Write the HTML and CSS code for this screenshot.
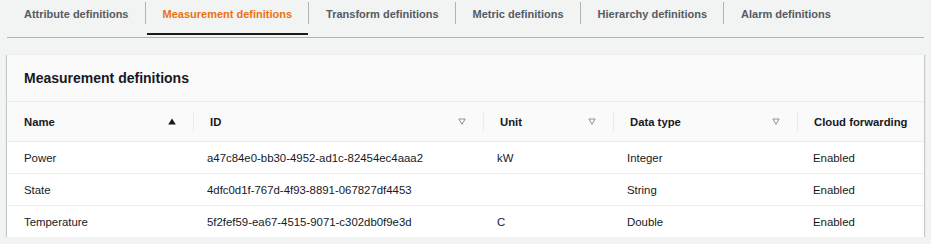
FILE: index.html
```html
<!DOCTYPE html>
<html lang="en">
<head>
    <meta charset="UTF-8">
    <title>Measurement definitions</title>
    <link rel="stylesheet" href="styles.css">
</head>
<body>
    <div class="tabs">
        <div class="tab"><span>Attribute definitions</span></div>
        <div class="tab active"><span>Measurement definitions</span></div>
        <div class="tab"><span>Transform definitions</span></div>
        <div class="tab"><span>Metric definitions</span></div>
        <div class="tab"><span>Hierarchy definitions</span></div>
        <div class="tab"><span>Alarm definitions</span></div>
    </div>

    <div class="card">
        <div class="card-header">Measurement definitions</div>
        <table class="defs">
            <colgroup>
                <col class="col-name">
                <col class="col-id">
                <col class="col-unit">
                <col class="col-type">
                <col>
            </colgroup>
            <thead>
                <tr>
                    <th><div class="th-inner">Name
                        <svg class="sort" width="8" height="7" viewBox="0 0 8 7"><path d="M4 0.5 L7.8 6.5 H0.2 Z" fill="#16191f"/></svg>
                    </div></th>
                    <th class="sep"><div class="th-inner">ID
                        <svg class="sort" width="8" height="7" viewBox="0 0 8 7"><path d="M0.8 1 H7.2 L4 6.3 Z" fill="none" stroke="#879596" stroke-width="1"/></svg>
                    </div></th>
                    <th class="sep"><div class="th-inner">Unit
                        <svg class="sort" width="8" height="7" viewBox="0 0 8 7"><path d="M0.8 1 H7.2 L4 6.3 Z" fill="none" stroke="#879596" stroke-width="1"/></svg>
                    </div></th>
                    <th class="sep"><div class="th-inner">Data type
                        <svg class="sort" width="8" height="7" viewBox="0 0 8 7"><path d="M0.8 1 H7.2 L4 6.3 Z" fill="none" stroke="#879596" stroke-width="1"/></svg>
                    </div></th>
                    <th class="sep"><div class="th-inner">Cloud forwarding</div></th>
                </tr>
            </thead>
            <tbody>
                <tr>
                    <td>Power</td>
                    <td>a47c84e0-bb30-4952-ad1c-82454ec4aaa2</td>
                    <td>kW</td>
                    <td>Integer</td>
                    <td>Enabled</td>
                </tr>
                <tr>
                    <td>State</td>
                    <td>4dfc0d1f-767d-4f93-8891-067827df4453</td>
                    <td></td>
                    <td>String</td>
                    <td>Enabled</td>
                </tr>
                <tr>
                    <td>Temperature</td>
                    <td>5f2fef59-ea67-4515-9071-c302db0f9e3d</td>
                    <td>C</td>
                    <td>Double</td>
                    <td>Enabled</td>
                </tr>
            </tbody>
        </table>
    </div>
</body>
</html>
```

FILE: styles.css
```css
body {
    margin: 0;
    padding: 0;
    font-family: 'Liberation Sans', Arial, sans-serif;
    background: #f2f3f3;
    color: #16191f;
}

.tabs {
    display: flex;
    margin: 0 7px 0 7px;
    border-bottom: 1px solid #aab7b8;
    height: 37px;
}

.tab {
    position: relative;
    padding-top: 2px;
    font-size: 11px;
    font-weight: bold;
    color: #545b64;
}

.tab span {
    display: block;
    height: 22px;
    line-height: 24px;
    padding: 0 16px 0 17px;
    border-left: 1px solid #aab7b8;
}

.tab:first-child span {
    border-left: none;
}

.tab.active {
    color: #ec7211;
}

.tab.active::after {
    content: "";
    position: absolute;
    left: 2px;
    right: 0;
    bottom: 2px;
    height: 2px;
    background: #16191f;
}

.card {
    margin: 16px 7px 0 7px;
    background: #ffffff;
    border-top: 1px solid #eaeded;
    box-shadow: 0 1px 1px 0 rgba(0, 28, 36, 0.3), 1px 1px 1px 0 rgba(0, 28, 36, 0.15), -1px 1px 1px 0 rgba(0, 28, 36, 0.15);
}

.card-header {
    background: #fafafa;
    height: 46px;
    line-height: 46px;
    padding-left: 17px;
    font-size: 14px;
    font-weight: bold;
    border-bottom: 1px solid #eaeded;
}

.defs {
    width: 100%;
    border-collapse: collapse;
    table-layout: fixed;
    font-size: 11.4px;
}

.col-name { width: 186px; }
.col-id { width: 290px; }
.col-unit { width: 130px; }
.col-type { width: 184px; }

.defs th {
    background: #fafafa;
    height: 39px;
    padding: 0;
    text-align: left;
    font-weight: bold;
    font-size: 11.3px;
    white-space: nowrap;
    border-bottom: 1px solid #eaeded;
}

.th-inner {
    display: flex;
    align-items: center;
    justify-content: space-between;
    height: 20px;
    padding: 0 17px 0 16px;
}

.defs th:first-child .th-inner {
    padding-left: 17px;
}

.defs th:last-child .th-inner {
    padding-right: 0;
}

.defs th.sep .th-inner {
    border-left: 1px solid #eaeded;
}

.sort {
    display: block;
}

.defs td {
    height: 31px;
    padding: 0 0 0 14px;
    border-bottom: 1px solid #eaeded;
    white-space: nowrap;
}

.defs td:first-child {
    padding-left: 17px;
}

.defs td:last-child {
    padding-left: 16px;
}

.defs tr:last-child td {
    border-bottom: none;
}
```
